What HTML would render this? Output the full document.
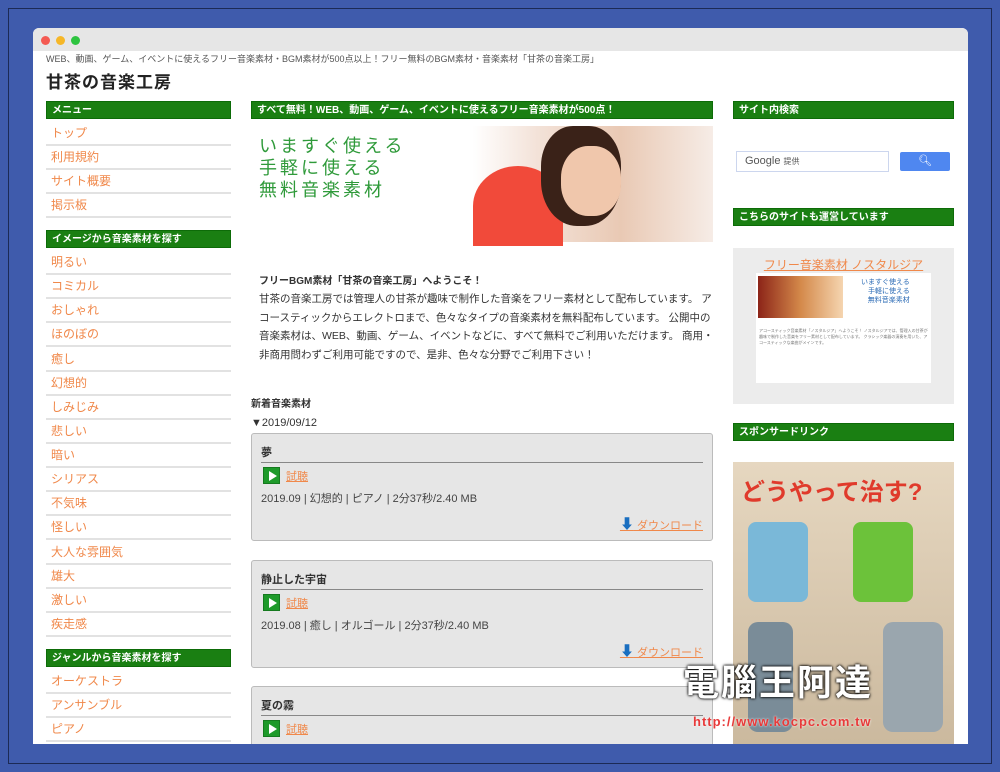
<!DOCTYPE html>
<html><head><meta charset="utf-8"><style>
*{margin:0;padding:0;box-sizing:border-box}
body{width:1000px;height:772px;background:#3f5bac;font-family:"Liberation Sans","Noto Sans CJK JP",sans-serif;position:relative;overflow:hidden}
.frame{position:absolute;left:8px;top:8px;width:984px;height:756px;border:1px solid #1c2a55}
.win{position:absolute;left:33px;top:28px;width:935px;height:716px;background:#fff;border-radius:6px 6px 0 0;overflow:hidden}
.bar{height:23px;background:#e6e6e6;position:relative}
.dot{position:absolute;top:8px;width:9px;height:9px;border-radius:50%}
.a{position:absolute}
.hd{position:absolute;height:18px;background:#1a7f12;color:#fff;font-size:10px;font-weight:bold;line-height:18px;padding-left:5px;border:1px solid #0d6b08}
.li{position:absolute;left:13px;width:185px;height:24px;border-bottom:2px solid #e2e2e2;color:#f0884a;font-size:12px;line-height:22px;padding-left:5px}
.t{font-size:11px;color:#333}
.card{position:absolute;left:218px;width:462px;height:108px;background:#e6e6e6;border:1px solid #bbb;border-radius:3px}
.card .ti{position:absolute;left:9px;top:10px;font-size:11px;color:#333;font-weight:bold}
.card .ln{position:absolute;left:9px;right:9px;top:28px;border-top:1px solid #888}
.play{position:absolute;left:11px;top:33px;width:17px;height:17px;background:#1e9a2a;border:1px solid #167a1f}
.play:after{content:"";position:absolute;left:5px;top:3px;border-left:8px solid #fff;border-top:5px solid transparent;border-bottom:5px solid transparent}
.sh{position:absolute;left:34px;top:34px;font-size:11px;color:#f0884a;text-decoration:underline}
.meta{position:absolute;left:9px;top:56px;font-size:11px;color:#444}
.dl{position:absolute;right:9px;top:80px;font-size:11px;color:#f0884a;text-decoration:underline}
</style></head><body>
<div class="frame"></div>
<div class="win">
<div class="bar"><div class="dot" style="left:8px;background:#f45a52"></div><div class="dot" style="left:23px;background:#f6b728"></div><div class="dot" style="left:38px;background:#2ec440"></div></div>
<div class="a" style="left:13px;top:24px;font-size:9px;color:#555">WEB、動画、ゲーム、イベントに使えるフリー音楽素材・BGM素材が500点以上！フリー無料のBGM素材・音楽素材「甘茶の音楽工房」</div>
<div class="a" style="left:13px;top:40px;font-size:17px;font-weight:bold;color:#222;letter-spacing:1px">甘茶の音楽工房</div>

<div class="hd" style="left:13px;top:73px;width:185px">メニュー</div>
<div class="li" style="top:94px">トップ</div>
<div class="li" style="top:118px">利用規約</div>
<div class="li" style="top:142px">サイト概要</div>
<div class="li" style="top:166px">掲示板</div>
<div class="hd" style="left:13px;top:202px;width:185px">イメージから音楽素材を探す</div>
<div class="li" style="top:223px">明るい</div>
<div class="li" style="top:247px">コミカル</div>
<div class="li" style="top:271px">おしゃれ</div>
<div class="li" style="top:295px">ほのぼの</div>
<div class="li" style="top:320px">癒し</div>
<div class="li" style="top:344px">幻想的</div>
<div class="li" style="top:368px">しみじみ</div>
<div class="li" style="top:392px">悲しい</div>
<div class="li" style="top:416px">暗い</div>
<div class="li" style="top:440px">シリアス</div>
<div class="li" style="top:464px">不気味</div>
<div class="li" style="top:488px">怪しい</div>
<div class="li" style="top:513px">大人な雰囲気</div>
<div class="li" style="top:537px">雄大</div>
<div class="li" style="top:561px">激しい</div>
<div class="li" style="top:585px">疾走感</div>
<div class="hd" style="left:13px;top:621px;width:185px">ジャンルから音楽素材を探す</div>
<div class="li" style="top:642px">オーケストラ</div>
<div class="li" style="top:666px">アンサンブル</div>
<div class="li" style="top:690px">ピアノ</div>

<div class="hd" style="left:218px;top:73px;width:462px">すべて無料！WEB、動画、ゲーム、イベントに使えるフリー音楽素材が500点！</div>
<div class="a" style="left:218px;top:98px;width:462px;height:116px;background:linear-gradient(90deg,#fff 0,#fff 48%,#f3e2d8 62%,#e9c9b4 80%,#f6ece6 100%)">
<div class="a" style="left:8px;top:9px;font-size:18px;line-height:22px;color:#2f9a3a;letter-spacing:3px">いますぐ使える<br>手軽に使える<br>無料音楽素材</div>
<div class="a" style="left:222px;top:40px;width:90px;height:80px;border-radius:50% 50% 0 0;background:#f14a3a"></div>
<div class="a" style="left:290px;top:0;width:80px;height:100px;border-radius:40% 40% 45% 45%;background:#3a2218"></div>
<div class="a" style="left:310px;top:20px;width:60px;height:70px;border-radius:45%;background:#f0c7ac"></div>
</div>
<div class="a t" style="left:226px;top:244px;font-weight:bold;font-size:10px">フリーBGM素材「甘茶の音楽工房」へようこそ！</div>
<div class="a" style="left:226px;top:262px;width:455px;font-size:10.5px;line-height:18.5px;color:#333">甘茶の音楽工房では管理人の甘茶が趣味で制作した音楽をフリー素材として配布しています。 アコースティックからエレクトロまで、色々なタイプの音楽素材を無料配布しています。 公開中の音楽素材は、WEB、動画、ゲーム、イベントなどに、すべて無料でご利用いただけます。 商用・非商用問わずご利用可能ですので、是非、色々な分野でご利用下さい！</div>
<div class="a t" style="left:218px;top:367px;font-size:10px;font-weight:bold">新着音楽素材</div>
<div class="a t" style="left:218px;top:389px">▼2019/09/12</div>
<div class="card" style="top:405px"><div class="ti">夢</div><div class="ln"></div><div class="play"></div><div class="sh">試聴</div><div class="meta">2019.09 | 幻想的 | ピアノ | 2分37秒/2.40 MB</div><div class="dl"><span style="color:#1a6fc0;text-decoration:none;font-size:14px">⬇</span> ダウンロード</div></div>
<div class="card" style="top:532px"><div class="ti">静止した宇宙</div><div class="ln"></div><div class="play"></div><div class="sh">試聴</div><div class="meta">2019.08 | 癒し | オルゴール | 2分37秒/2.40 MB</div><div class="dl"><span style="color:#1a6fc0;font-size:14px">⬇</span> ダウンロード</div></div>
<div class="card" style="top:658px"><div class="ti">夏の霧</div><div class="ln"></div><div class="play"></div><div class="sh">試聴</div></div>

<div class="hd" style="left:700px;top:73px;width:221px">サイト内検索</div>
<div class="a" style="left:703px;top:123px;width:153px;height:21px;border:1px solid #ccd6ee;font-size:11px;color:#555;line-height:19px;padding-left:8px">Google <span style="font-size:8px">提供</span></div>
<div class="a" style="left:867px;top:124px;width:50px;height:19px;background:#4f87f0;border-radius:2px;color:#fff;font-size:11px;text-align:center;line-height:19px">&#x1F50D;&#xFE0E;</div>
<div class="hd" style="left:700px;top:180px;width:221px">こちらのサイトも運営しています</div>
<div class="a" style="left:700px;top:220px;width:221px;height:156px;background:#ececec">
<div class="a" style="left:0;width:221px;top:8px;text-align:center;font-size:12px;color:#f0884a;text-decoration:underline">フリー音楽素材 ノスタルジア</div>
<div class="a" style="left:23px;top:25px;width:175px;height:110px;background:#fff">
<div class="a" style="left:2px;top:3px;width:85px;height:42px;background:linear-gradient(90deg,#8c2418,#d4894a,#f5d5b0)"></div>
<div class="a" style="left:105px;top:5px;font-size:7px;line-height:9px;color:#2a6ab5;text-align:right">いますぐ使える<br>手軽に使える<br>無料音楽素材</div>
<div class="a" style="left:3px;top:55px;width:170px;font-size:4px;line-height:6px;color:#777">アコースティック音楽素材「ノスタルジア」へようこそ！ ノスタルジアでは、管理人の甘茶が趣味で制作した音楽をフリー素材として配布しています。 クラシック楽器の演奏を用いた、アコースティックな楽曲がメインです。</div>
</div></div>
<div class="hd" style="left:700px;top:395px;width:221px">スポンサードリンク</div>
<div class="a" style="left:700px;top:434px;width:221px;height:282px;background:linear-gradient(#e6d7c0,#cbb99e)">
<div class="a" style="left:8px;top:10px;font-size:24px;font-weight:bold;color:#e03a2b">どうやって治す?</div>
<div class="a" style="left:15px;top:60px;width:60px;height:80px;background:#7ab8d8;border-radius:8px"></div>
<div class="a" style="left:120px;top:60px;width:60px;height:80px;background:#6cc23a;border-radius:8px"></div>
<div class="a" style="left:15px;top:160px;width:45px;height:110px;background:#7a8c98;border-radius:10px"></div>
<div class="a" style="left:150px;top:160px;width:60px;height:110px;background:#9aa6ae;border-radius:10px"></div>
</div>
<div class="a" style="left:650px;top:626px;font-size:36px;font-weight:bold;color:#fff;text-shadow:0 0 3px #000,0 0 2px #000;letter-spacing:2px">電腦王阿達</div>
<div class="a" style="left:660px;top:686px;font-size:13px;color:#e83a3a;font-weight:bold;letter-spacing:1px;text-shadow:0 0 2px #fff">http://www.kocpc.com.tw</div>
</div>
</body></html>
